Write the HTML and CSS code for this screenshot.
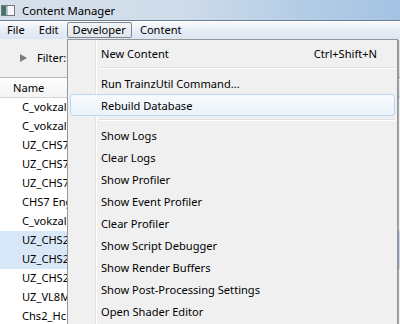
FILE: index.html
```html
<!DOCTYPE html>
<html lang="en">
<head>
    <meta charset="UTF-8">
    <title>Content Manager</title>
    <link rel="stylesheet" href="styles.css">
</head>
<body>
    <div class="window">
        <!-- Title bar -->
        <div class="titlebar">
            <svg class="app-icon" width="14" height="11" viewBox="0 0 14 11">
                <rect x="0.5" y="0.5" width="13" height="10" fill="#f4f6f8" stroke="#6f7a80"/>
                <rect x="1" y="1" width="4" height="9" fill="#3f7567"/>
                <rect x="5" y="1" width="2" height="9" fill="#b7c1c4"/>
            </svg>
            <span class="title">Content Manager</span>
        </div>

        <!-- Menu bar -->
        <div class="menubar">
            <span class="menu-item">File</span>
            <span class="menu-item">Edit</span>
            <span class="menu-item open">Developer</span>
            <span class="menu-item">Content</span>
        </div>

        <!-- Toolbar -->
        <div class="toolbar">
            <span class="arrow"></span>
            <span class="filter">Filter:</span>
        </div>

        <!-- Asset list -->
        <div class="list">
            <div class="list-head">Name</div>
            <div class="row">C_vokzal</div>
            <div class="row">C_vokzal</div>
            <div class="row">UZ_CHS7</div>
            <div class="row">UZ_CHS7</div>
            <div class="row">UZ_CHS7</div>
            <div class="row">CHS7 Engine</div>
            <div class="row">C_vokzal</div>
            <div class="row selected">UZ_CHS2</div>
            <div class="row selected">UZ_CHS2</div>
            <div class="row">UZ_CHS2</div>
            <div class="row">UZ_VL8M</div>
            <div class="row">Chs2_Hc</div>
        </div>

        <!-- Developer dropdown -->
        <div class="dropdown">
            <div class="item"><span>New Content</span><span class="shortcut">Ctrl+Shift+N</span></div>
            <div class="sep"></div>
            <div class="item">Run TrainzUtil Command...</div>
            <div class="item hover">Rebuild Database</div>
            <div class="sep"></div>
            <div class="item">Show Logs</div>
            <div class="item">Clear Logs</div>
            <div class="item">Show Profiler</div>
            <div class="item">Show Event Profiler</div>
            <div class="item">Clear Profiler</div>
            <div class="item">Show Script Debugger</div>
            <div class="item">Show Render Buffers</div>
            <div class="item">Show Post-Processing Settings</div>
            <div class="item">Open Shader Editor</div>
        </div>
    </div>
</body>
</html>
```

FILE: styles.css
```css
/* Reset */
* {
    margin: 0;
    padding: 0;
    box-sizing: border-box;
}

body {
    width: 400px;
    height: 324px;
    overflow: hidden;
    font-family: "Segoe UI", "Noto Sans", sans-serif;
    font-size: 11.1px;
    color: #000;
    background: #fff;
}

.window {
    position: relative;
    width: 400px;
    height: 324px;
    overflow: hidden;
}

/* Title bar */
.titlebar {
    height: 21px;
    display: flex;
    align-items: center;
    padding-left: 1px;
    background: linear-gradient(to right, #d6e0ea, #cfdcea 45%, #b4cde6 75%, #a3c3e4);
    border-bottom: 1px solid #6d7f91;
}

.app-icon {
    margin-right: 7px;
}

.title {
    font-size: 11.3px;
}

/* Menu bar */
.menubar {
    height: 18px;
    display: flex;
    align-items: center;
    padding-left: 1px;
    background: linear-gradient(#fbfcfd, #e8eef6 50%, #dce5f1);
}

.menu-item {
    height: 16px;
    line-height: 14px;
    padding: 0 5px;
    margin-right: 2px;
    border: 1px solid transparent;
}

.menu-item.open {
    border-color: #7f8a96;
    border-radius: 2px;
    background: linear-gradient(#f2f4f7, #e1e6ec);
}

/* Toolbar */
.toolbar {
    height: 39px;
    display: flex;
    align-items: center;
    padding: 0 0 1px 20px;
    background: #f0f0f0;
    border-bottom: 1px solid #b7b7b7;
}

.arrow {
    width: 0;
    height: 0;
    border-top: 4px solid transparent;
    border-bottom: 4px solid transparent;
    border-left: 7px solid #7a7a7a;
    margin-right: 10px;
}

/* List */
.list-head {
    height: 20px;
    line-height: 19px;
    padding-left: 13px;
    background: linear-gradient(#fdfdfd, #f3f4f6);
    border-bottom: 1px solid #d5d5d5;
}

.row {
    height: 19px;
    line-height: 18px;
    padding-left: 22px;
    white-space: nowrap;
}

.row.selected {
    background: #d9e8f8;
}

/* Dropdown menu */
.dropdown {
    position: absolute;
    left: 67px;
    top: 39px;
    width: 331px;
    height: 300px;
    padding: 2px 2px;
    background: linear-gradient(to right, #f0f0f0 27px, #e2e3e3 27px, #e2e3e3 28px, #fff 28px, #fff 29px, #f0f0f0 29px);
    border: 1px solid #979797;
    box-shadow: 1px 1px 1px rgba(0, 0, 0, 0.35);
}

.item {
    height: 22px;
    display: flex;
    align-items: center;
    justify-content: space-between;
    padding: 0 17px 0 30px;
    border: 1px solid transparent;
    border-radius: 3px;
}

.item.hover {
    border-color: #b8d6f6;
    background: linear-gradient(#f8fbfe, #eaf2fb);
}

.sep {
    height: 8px;
    margin-left: 29px;
    background: linear-gradient(transparent 3px, #e0e0e0 3px, #e0e0e0 4px, #fff 4px, #fff 5px, transparent 5px);
}
```
